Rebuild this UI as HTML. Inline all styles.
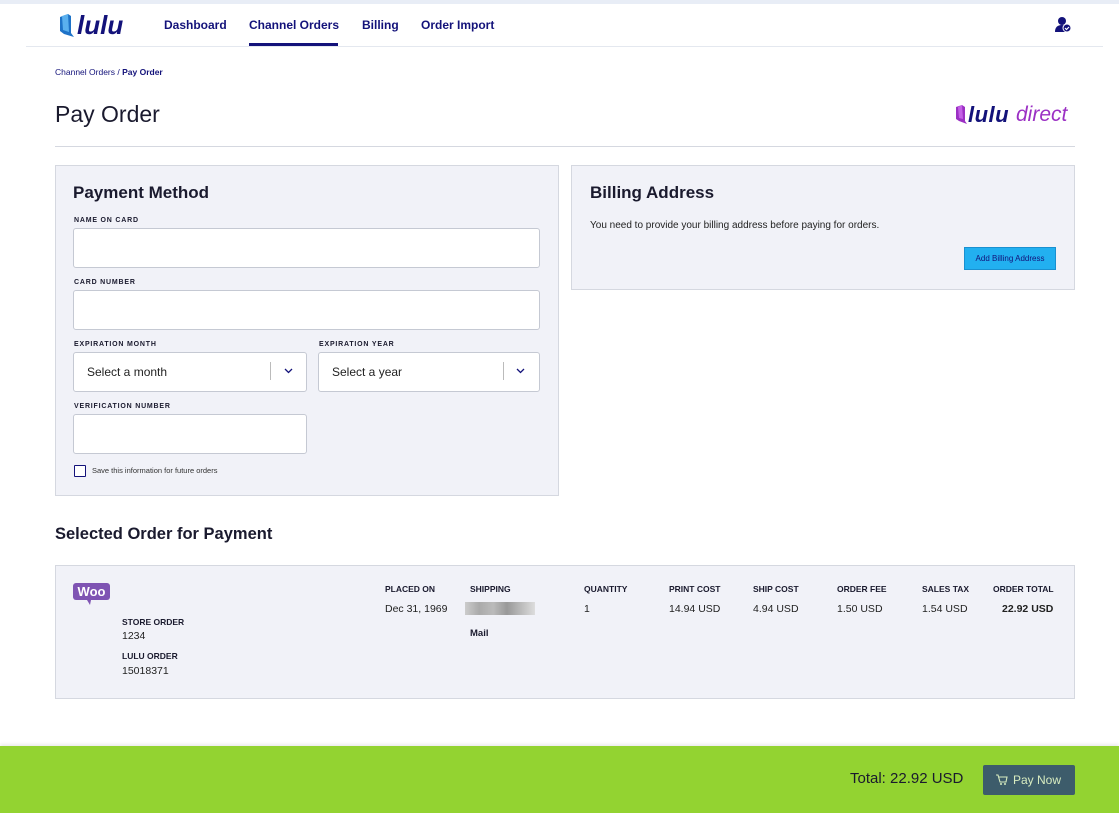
<!DOCTYPE html>
<html><head><meta charset="utf-8"><style>
*{box-sizing:border-box;margin:0;padding:0}
body{width:1119px;height:813px;position:relative;background:#fff;font-family:"Liberation Sans",sans-serif;color:#1a1a2e;overflow:hidden}
.a{position:absolute}
.nav{font-size:12px;font-weight:bold;color:#13127a;top:18px}
.lbl{font-size:7px;font-weight:bold;letter-spacing:.8px;color:#1a1a2e}
.inp{background:#fff;border:1px solid #c5c9d3;border-radius:3px}
.sel{font-size:12px;color:#222;padding:12px 0 0 13px}
.th{font-size:8.5px;font-weight:bold;color:#1a1a2e}
.td{font-size:10.5px;color:#222}
</style></head><body>
<div class="a" style="left:0;top:0;width:1119px;height:4px;background:#e8edf6"></div>
<div class="a" style="left:26px;top:46px;width:1077px;height:1px;background:#e4e8ef"></div>
<svg class="a" style="left:58px;top:13px" width="20" height="24" viewBox="0 0 20 24"><path d="M2 4 L10 1 L13 3 L13 20 L16 24 L6 21 L2 18Z" fill="#1e73c8"/><path d="M4 3 L10 1 L11 19 L5 17Z" fill="#5ab0ee"/></svg>
<div class="a" style="left:77px;top:10px;font-size:26px;font-weight:bold;font-style:italic;color:#13127a;letter-spacing:0px">lulu</div>
<div class="a nav" style="left:164px">Dashboard</div>
<div class="a nav" style="left:249px">Channel Orders</div>
<div class="a" style="left:249px;top:43px;width:89px;height:3px;background:#13127a"></div>
<div class="a nav" style="left:362px">Billing</div>
<div class="a nav" style="left:421px">Order Import</div>
<svg class="a" style="left:1054px;top:16px" width="18" height="17" viewBox="0 0 18 17"><circle cx="8" cy="5" r="4" fill="#13127a"/><path d="M1 16 Q1 9 8 9 Q13 9 14 12 L14 16Z" fill="#13127a"/><circle cx="13" cy="12" r="4" fill="#13127a" stroke="#fff" stroke-width="1"/><path d="M11 12 L12.5 13.5 L15 11" stroke="#fff" stroke-width="1.2" fill="none"/></svg>
<div class="a" style="left:55px;top:67px;font-size:8.5px;color:#13127a">Channel Orders / <b>Pay Order</b></div>
<div class="a" style="left:55px;top:101px;font-size:23px;color:#1a1a2e">Pay Order</div>
<svg class="a" style="left:955px;top:104px" width="14" height="20" viewBox="0 0 14 20"><path d="M1 3 L7 1 L10 3 L10 17 L12 20 L4 17 L1 15Z" fill="#9b30c4"/><path d="M3 3 L7 1 L8 15 L4 14Z" fill="#c460e6"/></svg>
<div class="a" style="left:968px;top:102px;font-size:22px;font-weight:bold;font-style:italic;color:#13127a;letter-spacing:0.5px">lulu</div>
<div class="a" style="left:1016px;top:103px;font-size:21px;font-style:italic;color:#9b30c4">direct</div>
<div class="a" style="left:55px;top:146px;width:1020px;height:1px;background:#d5d8e0"></div>

<div class="a" style="left:55px;top:165px;width:504px;height:331px;background:#f1f2f8;border:1px solid #d5d8e0"></div>
<div class="a" style="left:73px;top:183px;font-size:17px;font-weight:bold">Payment Method</div>
<div class="a lbl" style="left:74px;top:217px">NAME ON CARD</div>
<div class="a inp" style="left:73px;top:228px;width:467px;height:40px"></div>
<div class="a lbl" style="left:74px;top:279px">CARD NUMBER</div>
<div class="a inp" style="left:73px;top:290px;width:467px;height:40px"></div>
<div class="a lbl" style="left:74px;top:341px">EXPIRATION MONTH</div>
<div class="a inp sel" style="left:73px;top:352px;width:234px;height:40px">Select a month</div>
<div class="a" style="left:270px;top:362px;width:1px;height:18px;background:#bbb"></div>
<svg class="a" style="left:284px;top:368px" width="9" height="6" viewBox="0 0 9 6"><path d="M1 1 L4.5 4.5 L8 1" stroke="#13127a" stroke-width="1.3" fill="none"/></svg>
<div class="a lbl" style="left:319px;top:341px">EXPIRATION YEAR</div>
<div class="a inp sel" style="left:318px;top:352px;width:222px;height:40px">Select a year</div>
<div class="a" style="left:503px;top:362px;width:1px;height:18px;background:#bbb"></div>
<svg class="a" style="left:516px;top:368px" width="9" height="6" viewBox="0 0 9 6"><path d="M1 1 L4.5 4.5 L8 1" stroke="#13127a" stroke-width="1.3" fill="none"/></svg>
<div class="a lbl" style="left:74px;top:403px">VERIFICATION NUMBER</div>
<div class="a inp" style="left:73px;top:414px;width:234px;height:40px"></div>
<div class="a" style="left:74px;top:465px;width:12px;height:12px;border:1.3px solid #13127a;background:#fff;border-radius:1px"></div>
<div class="a" style="left:92px;top:466px;font-size:7.5px;color:#333">Save this information for future orders</div>

<div class="a" style="left:571px;top:165px;width:504px;height:125px;background:#f1f2f8;border:1px solid #d5d8e0"></div>
<div class="a" style="left:590px;top:183px;font-size:17px;font-weight:bold">Billing Address</div>
<div class="a" style="left:590px;top:220px;font-size:10px;color:#222">You need to provide your billing address before paying for orders.</div>
<div class="a" style="left:964px;top:247px;width:92px;height:23px;background:#22b0f0;border:1px solid #1a90d0;font-size:8px;color:#13127a;text-align:center;line-height:21px">Add Billing Address</div>

<div class="a" style="left:55px;top:525px;font-size:16.5px;font-weight:bold">Selected Order for Payment</div>
<div class="a" style="left:55px;top:565px;width:1020px;height:134px;background:#f1f2f8;border:1px solid #d5d8e0"></div>
<svg class="a" style="left:73px;top:583px" width="37" height="22" viewBox="0 0 37 22"><rect x="0" y="0" width="37" height="17" rx="3" fill="#7f54b3"/><path d="M14 17 L17 22 L18 17Z" fill="#7f54b3"/><text x="18.5" y="13" font-family="Liberation Sans" font-weight="bold" font-size="13" fill="#fff" text-anchor="middle">Woo</text></svg>
<div class="a th" style="left:122px;top:617px">STORE ORDER</div>
<div class="a td" style="left:122px;top:630px">1234</div>
<div class="a th" style="left:122px;top:651px">LULU ORDER</div>
<div class="a td" style="left:122px;top:665px">15018371</div>
<div class="a th" style="left:385px;top:584px">PLACED ON</div>
<div class="a td" style="left:385px;top:603px">Dec 31, 1969</div>
<div class="a th" style="left:470px;top:584px">SHIPPING</div>
<div class="a" style="left:465px;top:602px;width:70px;height:13px;background:linear-gradient(90deg,#ccc,#aaa,#bbb,#999,#bbb,#ddd)"></div>
<div class="a th" style="left:470px;top:628px;font-size:9.5px">Mail</div>
<div class="a th" style="left:584px;top:584px">QUANTITY</div>
<div class="a td" style="left:584px;top:603px">1</div>
<div class="a th" style="left:669px;top:584px">PRINT COST</div>
<div class="a td" style="left:669px;top:603px">14.94 USD</div>
<div class="a th" style="left:753px;top:584px">SHIP COST</div>
<div class="a td" style="left:753px;top:603px">4.94 USD</div>
<div class="a th" style="left:837px;top:584px">ORDER FEE</div>
<div class="a td" style="left:837px;top:603px">1.50 USD</div>
<div class="a th" style="left:922px;top:584px">SALES TAX</div>
<div class="a td" style="left:922px;top:603px">1.54 USD</div>
<div class="a th" style="left:993px;top:584px">ORDER TOTAL</div>
<div class="a td" style="left:1002px;top:603px;font-weight:bold">22.92 USD</div>

<div class="a" style="left:0;top:746px;width:1119px;height:67px;background:#93d331;box-shadow:0 -2px 3px rgba(0,0,0,.08)"></div>
<div class="a" style="left:850px;top:770px;font-size:15px;color:#1a1a2e">Total: 22.92 USD</div>
<div class="a" style="left:983px;top:765px;width:92px;height:30px;background:#3d5c6b;border-radius:2px;color:#d8ecc0;font-size:12px;line-height:30px;padding-left:30px">Pay Now</div>
<svg class="a" style="left:995px;top:773px" width="13" height="13" viewBox="0 0 13 13"><path d="M1 2 H3 L5 9 H11 L12 4 H4" stroke="#d8ecc0" stroke-width="1.1" fill="none"/><circle cx="6" cy="11" r="1" fill="#d8ecc0"/><circle cx="10" cy="11" r="1" fill="#d8ecc0"/></svg>
</body></html>
